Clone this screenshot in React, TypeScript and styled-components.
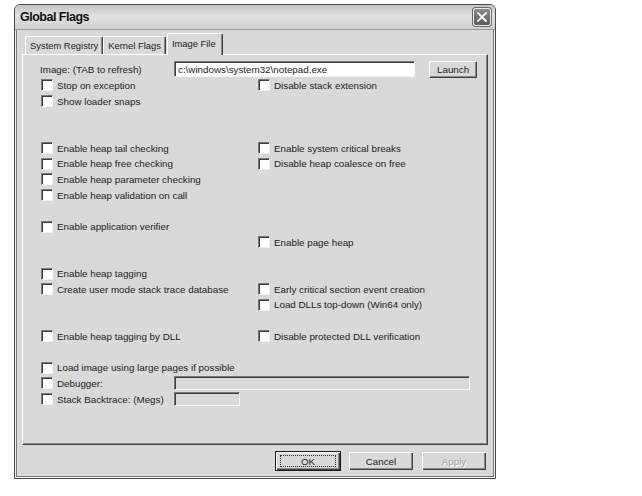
import React, { ReactElement } from 'react';
import styled, { createGlobalStyle } from 'styled-components';

const GlobalStyle = createGlobalStyle`
  body {
    margin: 0;
    background: #ffffff;
    font-family: 'Liberation Sans', Arial, sans-serif;
    color: #1c1c1c;
  }
`;

const Page = styled.div`
  padding: 4px 0 0 14px;
`;

const Window = styled.div`
  width: 482px;
  height: 475px;
  box-sizing: border-box;
  display: flex;
  flex-direction: column;
  background: #d9d9d9;
  border: 1px solid #4a4a4a;
  border-radius: 6px 6px 0 0;
  box-shadow: inset 0 0 0 1px #f0f0f0, inset 0 0 0 2px #7c7c7c;
`;

const TitleBar = styled.div`
  height: 24px;
  display: flex;
  align-items: center;
  justify-content: space-between;
  padding: 0 4px 0 5px;
  border-radius: 5px 5px 0 0;
  background: linear-gradient(#c4c4c4, #e2e2e2 45%, #d0d0d0);
  border-bottom: 1px solid #9a9a9a;
`;

const Title = styled.span`
  font-size: 12.5px;
  font-weight: bold;
  letter-spacing: -0.5px;
  color: #111;
`;

const CloseButton = styled.div`
  width: 18px;
  height: 18px;
  box-sizing: border-box;
  display: flex;
  align-items: center;
  justify-content: center;
  border: 1px solid #e8e8e8;
  border-radius: 3px;
  background: linear-gradient(#8a8a8a, #5c5c5c);
  box-shadow: 0 0 0 1px #6a6a6a;
`;

const Content = styled.div`
  flex: 1;
  display: flex;
  flex-direction: column;
  padding: 3px 7px 0 7px;
`;

const TabRow = styled.div`
  height: 21px;
  display: flex;
  align-items: flex-end;
  padding-left: 3px;
  position: relative;
  z-index: 1;
`;

const Tab = styled.div<{ $active?: boolean }>`
  height: ${(p) => (p.$active ? 22 : 18)}px;
  box-sizing: border-box;
  display: flex;
  align-items: center;
  font-size: 9.4px;
  padding: ${(p) => (p.$active ? '0 6px 3px 4px' : '0 4px 0 4px')};
  margin: ${(p) => (p.$active ? '0 -1px -1px 1px' : '0')};
  background: #d9d9d9;
  border-top: 1px solid #ffffff;
  border-left: 1px solid #ffffff;
  border-right: 1px solid #404040;
  box-shadow: inset -1px 0 #8a8a8a;
  border-radius: 2px 2px 0 0;
`;

const Panel = styled.div`
  height: 391px;
  box-sizing: border-box;
  border-top: 1px solid #ffffff;
  border-left: 1px solid #ffffff;
  border-right: 1px solid #404040;
  border-bottom: 1px solid #404040;
  box-shadow: inset -1px -1px #8a8a8a;
  padding: 6px 10px 0 17px;
`;

const ImageRow = styled.div`
  height: 16px;
  display: flex;
  align-items: center;
  margin-bottom: 0.5px;
`;

const FieldLabel = styled.span<{ $width: number }>`
  width: ${(p) => p.$width}px;
  flex-shrink: 0;
  font-size: 9.8px;
  white-space: nowrap;
`;

const TextBox = styled.div<{ $width: number; $height: number; $disabled?: boolean }>`
  width: ${(p) => p.$width}px;
  height: ${(p) => p.$height}px;
  box-sizing: border-box;
  display: flex;
  align-items: center;
  padding-left: 3px;
  font-size: 9.8px;
  background: ${(p) => (p.$disabled ? '#d9d9d9' : '#ffffff')};
  border-top: 1px solid #7a7a7a;
  border-left: 1px solid #7a7a7a;
  border-right: 1px solid #f6f6f6;
  border-bottom: 1px solid #f6f6f6;
  box-shadow: inset 1px 1px #3c3c3c;
`;

const SmallButton = styled.div`
  width: 48px;
  height: 17px;
  margin-left: 14px;
  box-sizing: border-box;
  display: flex;
  align-items: center;
  justify-content: center;
  font-size: 9.8px;
  background: #d9d9d9;
  border-top: 1px solid #ffffff;
  border-left: 1px solid #ffffff;
  border-right: 1px solid #404040;
  border-bottom: 1px solid #404040;
  box-shadow: inset -1px -1px #8a8a8a;
`;

const FlagGrid = styled.div`
  display: grid;
  grid-template-columns: 217px 1fr;
  grid-template-rows: repeat(21, 15.7px);
`;

const Flag = styled.label<{ $row: number; $col: number; $span?: boolean }>`
  grid-row: ${(p) => p.$row + 1};
  grid-column: ${(p) => (p.$span ? '1 / 3' : p.$col)};
  display: flex;
  align-items: center;
  font-size: 9.8px;
  white-space: nowrap;
`;

const Box = styled.span`
  width: 12px;
  height: 12px;
  margin: 0 4px 0 1px;
  flex-shrink: 0;
  box-sizing: border-box;
  background: #ffffff;
  border-top: 1px solid #7a7a7a;
  border-left: 1px solid #7a7a7a;
  border-right: 1px solid #f2f2f2;
  border-bottom: 1px solid #f2f2f2;
  box-shadow: inset 1px 1px #3c3c3c;
`;

const Footer = styled.div`
  display: flex;
  justify-content: flex-end;
  gap: 7px;
  padding: 6px 1px 0 0;
`;

const DialogButton = styled.div<{ $default?: boolean; $disabled?: boolean }>`
  width: 66px;
  height: 20px;
  box-sizing: border-box;
  display: flex;
  align-items: center;
  justify-content: center;
  font-size: 9.8px;
  background: #d9d9d9;
  color: ${(p) => (p.$disabled ? '#9c9c9c' : '#1c1c1c')};
  text-shadow: ${(p) => (p.$disabled ? '1px 1px #ffffff' : 'none')};
  border: 1px solid ${(p) => (p.$default ? '#1a1a1a' : 'transparent')};
  box-shadow: inset 1px 1px #ffffff, inset -1px -1px #404040, inset -2px -2px #8a8a8a;
`;

const FocusRing = styled.span`
  width: 56px;
  height: 12px;
  box-sizing: border-box;
  display: flex;
  align-items: center;
  justify-content: center;
  border: 1px dotted #303030;
`;

type FlagItem = { label: string; row: number; col: 1 | 2 };

const flags: FlagItem[] = [
  { label: 'Stop on exception', row: 0, col: 1 },
  { label: 'Disable stack extension', row: 0, col: 2 },
  { label: 'Show loader snaps', row: 1, col: 1 },
  { label: 'Enable heap tail checking', row: 4, col: 1 },
  { label: 'Enable system critical breaks', row: 4, col: 2 },
  { label: 'Enable heap free checking', row: 5, col: 1 },
  { label: 'Disable heap coalesce on free', row: 5, col: 2 },
  { label: 'Enable heap parameter checking', row: 6, col: 1 },
  { label: 'Enable heap validation on call', row: 7, col: 1 },
  { label: 'Enable application verifier', row: 9, col: 1 },
  { label: 'Enable page heap', row: 10, col: 2 },
  { label: 'Enable heap tagging', row: 12, col: 1 },
  { label: 'Create user mode stack trace database', row: 13, col: 1 },
  { label: 'Early critical section event creation', row: 13, col: 2 },
  { label: 'Load DLLs top-down (Win64 only)', row: 14, col: 2 },
  { label: 'Enable heap tagging by DLL', row: 16, col: 1 },
  { label: 'Disable protected DLL verification', row: 16, col: 2 },
  { label: 'Load image using large pages if possible', row: 18, col: 1 },
];

function CloseIcon(): ReactElement {
  return (
    <svg width="10" height="10" viewBox="0 0 10 10">
      <path d="M1 1 L9 9 M9 1 L1 9" stroke="#ffffff" strokeWidth="1.8" strokeLinecap="square" />
    </svg>
  );
}

export default function App(): ReactElement {
  return (
    <Page>
      <GlobalStyle />
      <Window>
        <TitleBar>
          <Title>Global Flags</Title>
          <CloseButton>
            <CloseIcon />
          </CloseButton>
        </TitleBar>
        <Content>
          <TabRow>
            <Tab>System Registry</Tab>
            <Tab>Kernel Flags</Tab>
            <Tab $active>Image File</Tab>
          </TabRow>
          <Panel>
            <ImageRow>
              <FieldLabel $width={134}>Image: (TAB to refresh)</FieldLabel>
              <TextBox $width={242} $height={16}>c:\windows\system32\notepad.exe</TextBox>
              <SmallButton>Launch</SmallButton>
            </ImageRow>
            <FlagGrid>
              {flags.map((f) => (
                <Flag key={f.label} $row={f.row} $col={f.col}>
                  <Box />
                  {f.label}
                </Flag>
              ))}
              <Flag $row={19} $col={1} $span>
                <Box />
                <FieldLabel $width={117}>Debugger:</FieldLabel>
                <TextBox $width={296} $height={14} $disabled />
              </Flag>
              <Flag $row={20} $col={1} $span>
                <Box />
                <FieldLabel $width={117}>Stack Backtrace: (Megs)</FieldLabel>
                <TextBox $width={66} $height={14} $disabled />
              </Flag>
            </FlagGrid>
          </Panel>
          <Footer>
            <DialogButton $default>
              <FocusRing>OK</FocusRing>
            </DialogButton>
            <DialogButton>Cancel</DialogButton>
            <DialogButton $disabled>Apply</DialogButton>
          </Footer>
        </Content>
      </Window>
    </Page>
  );
}
